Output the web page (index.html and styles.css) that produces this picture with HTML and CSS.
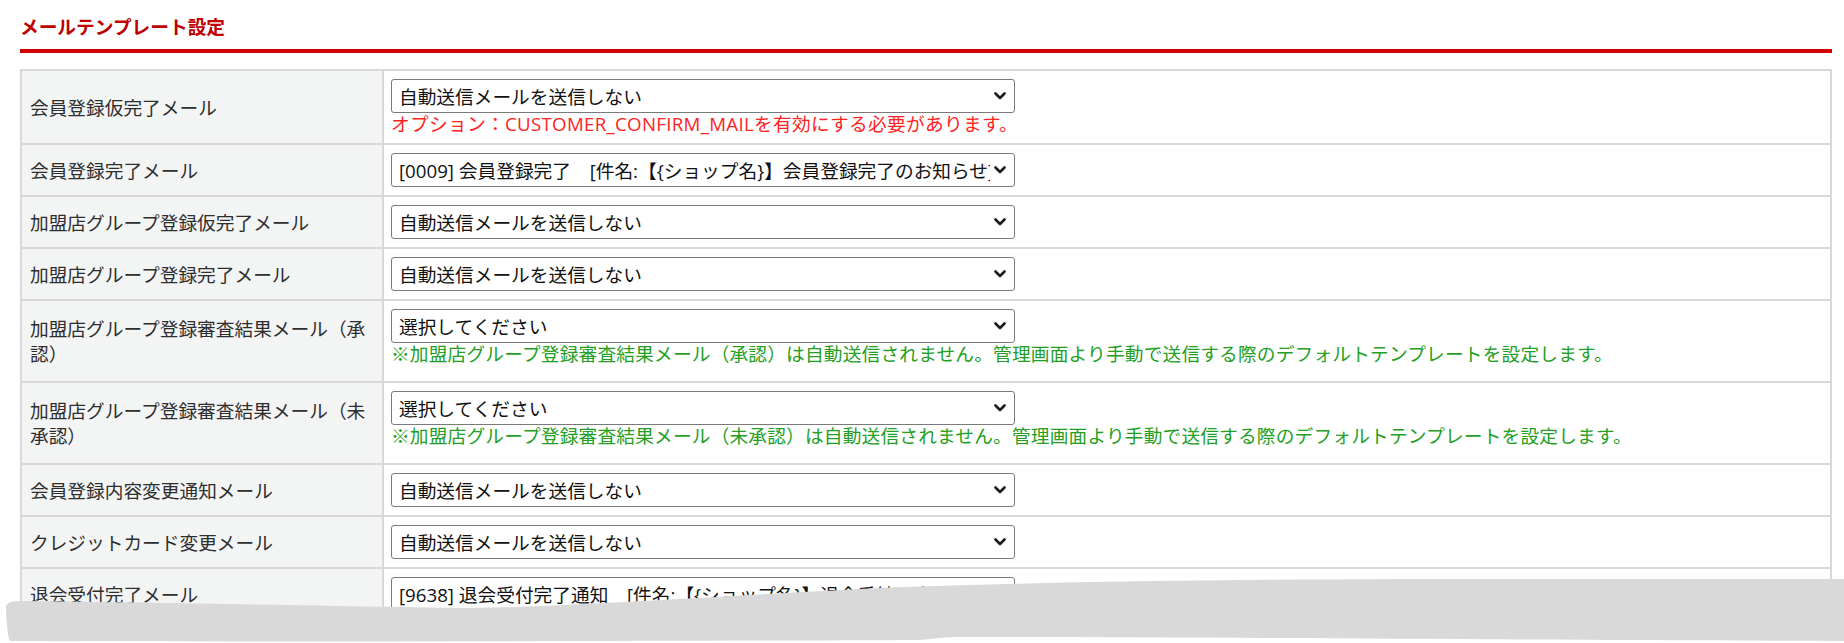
FILE: index.html
```html
<!DOCTYPE html>
<html lang="ja">
<head>
<meta charset="utf-8">
<title>メールテンプレート設定</title>
<link rel="stylesheet" href="styles.css">
</head>
<body>
<div class="page">
  <h1 class="section-title">メールテンプレート設定</h1>
  <table class="settings">
    <tr>
      <th>会員登録仮完了メール</th>
      <td>
        <div class="select-wrap">
          <select><option>自動送信メールを送信しない</option></select>
          <svg class="chev" viewBox="0 0 12 8" width="12" height="8"><path d="M1.5 1.5 L6 6 L10.5 1.5"/></svg>
        </div>
        <p class="note note-red">オプション：CUSTOMER_CONFIRM_MAILを有効にする必要があります。</p>
      </td>
    </tr>
    <tr>
      <th>会員登録完了メール</th>
      <td>
        <div class="select-wrap">
          <select><option>[0009] 会員登録完了　[件名:【{ショップ名}】会員登録完了のお知らせ]</option></select>
          <svg class="chev" viewBox="0 0 12 8" width="12" height="8"><path d="M1.5 1.5 L6 6 L10.5 1.5"/></svg>
        </div>
      </td>
    </tr>
    <tr>
      <th>加盟店グループ登録仮完了メール</th>
      <td>
        <div class="select-wrap">
          <select><option>自動送信メールを送信しない</option></select>
          <svg class="chev" viewBox="0 0 12 8" width="12" height="8"><path d="M1.5 1.5 L6 6 L10.5 1.5"/></svg>
        </div>
      </td>
    </tr>
    <tr>
      <th>加盟店グループ登録完了メール</th>
      <td>
        <div class="select-wrap">
          <select><option>自動送信メールを送信しない</option></select>
          <svg class="chev" viewBox="0 0 12 8" width="12" height="8"><path d="M1.5 1.5 L6 6 L10.5 1.5"/></svg>
        </div>
      </td>
    </tr>
    <tr>
      <th>加盟店グループ登録審査結果メール（承認）</th>
      <td>
        <div class="select-wrap">
          <select><option>選択してください</option></select>
          <svg class="chev" viewBox="0 0 12 8" width="12" height="8"><path d="M1.5 1.5 L6 6 L10.5 1.5"/></svg>
        </div>
        <p class="note note-green">※加盟店グループ登録審査結果メール（承認）は自動送信されません。管理画面より手動で送信する際のデフォルトテンプレートを設定します。</p>
      </td>
    </tr>
    <tr>
      <th>加盟店グループ登録審査結果メール（未承認）</th>
      <td>
        <div class="select-wrap">
          <select><option>選択してください</option></select>
          <svg class="chev" viewBox="0 0 12 8" width="12" height="8"><path d="M1.5 1.5 L6 6 L10.5 1.5"/></svg>
        </div>
        <p class="note note-green">※加盟店グループ登録審査結果メール（未承認）は自動送信されません。管理画面より手動で送信する際のデフォルトテンプレートを設定します。</p>
      </td>
    </tr>
    <tr>
      <th>会員登録内容変更通知メール</th>
      <td>
        <div class="select-wrap">
          <select><option>自動送信メールを送信しない</option></select>
          <svg class="chev" viewBox="0 0 12 8" width="12" height="8"><path d="M1.5 1.5 L6 6 L10.5 1.5"/></svg>
        </div>
      </td>
    </tr>
    <tr>
      <th>クレジットカード変更メール</th>
      <td>
        <div class="select-wrap">
          <select><option>自動送信メールを送信しない</option></select>
          <svg class="chev" viewBox="0 0 12 8" width="12" height="8"><path d="M1.5 1.5 L6 6 L10.5 1.5"/></svg>
        </div>
      </td>
    </tr>
    <tr>
      <th>退会受付完了メール</th>
      <td>
        <div class="select-wrap">
          <select><option>[9638] 退会受付完了通知　[件名:【{ショップ名}】退会手続き完了のお知らせ]</option></select>
          <svg class="chev" viewBox="0 0 12 8" width="12" height="8"><path d="M1.5 1.5 L6 6 L10.5 1.5"/></svg>
        </div>
      </td>
    </tr>
  </table>
</div>
<svg class="torn" viewBox="0 0 1844 70" width="1844" height="70" preserveAspectRatio="none">
  <path d="M6 33 C 8 29, 12 28, 20 28 C 200 30, 380 34, 470 35 C 560 34, 700 24, 900 14 C 1050 9, 1200 7, 1400 6 L 1844 6 L 1844 68 C 1500 67, 1200 64, 960 64 C 940 64, 935 66, 920 67 C 700 68, 300 69, 10 68 C 7 62, 6 40, 6 33 Z"/>
</svg>
</body>
</html>
```

FILE: styles.css
```css
html, body {
  margin: 0;
  padding: 0;
}

body {
  position: relative;
  height: 643px;
  overflow: hidden;
  background: #ffffff;
  color: #333333;
  font-family: "Open Sans", "Noto Sans CJK JP", sans-serif;
  font-size: 18.7px;
}

.page {
  padding: 14px 12px 0 20px;
}

.section-title {
  margin: 0 0 16px;
  padding: 0 0 10px;
  font-size: 18.7px;
  line-height: 25px;
  font-weight: bold;
  color: #c00000;
  border-bottom: 4px solid #d20000;
}

.settings {
  width: 100%;
  border-collapse: collapse;
  border: 2px solid #d8d8d8;
}

.settings th,
.settings td {
  border: 2px solid #d8d8d8;
}

.settings th {
  width: 362px;
  box-sizing: border-box;
  padding: 0 8px 0 8px;
  background: #f3f4f4;
  text-align: left;
  font-weight: normal;
  vertical-align: middle;
  line-height: 25px;
  color: #2e2e2e;
}

.settings td {
  padding: 8px 7px;
  vertical-align: top;
  background: #ffffff;
}

.select-wrap {
  position: relative;
  width: 624px;
  height: 34px;
}

.select-wrap select {
  -webkit-appearance: none;
  appearance: none;
  display: block;
  width: 100%;
  height: 34px;
  box-sizing: border-box;
  margin: 0;
  padding: 0 24px 0 7px;
  border: 1px solid #7a7a7a;
  border-radius: 3px;
  background: #ffffff;
  font-family: inherit;
  font-size: 18.7px;
  color: #111111;
}

.chev {
  position: absolute;
  right: 9px;
  top: 13px;
  pointer-events: none;
}

.chev path {
  fill: none;
  stroke: #1a1a1a;
  stroke-width: 2.6;
  stroke-linecap: round;
  stroke-linejoin: round;
}

.note {
  margin: 0;
  line-height: 22px;
}

.note-red {
  color: #ff2222;
  letter-spacing: 0.3px;
}

.note-green {
  color: #23a023;
  margin-bottom: 8px;
  letter-spacing: 0.18px;
}

.torn {
  position: absolute;
  left: 0;
  bottom: 0;
  display: block;
}

.torn path {
  fill: #d9d9d9;
}
```
